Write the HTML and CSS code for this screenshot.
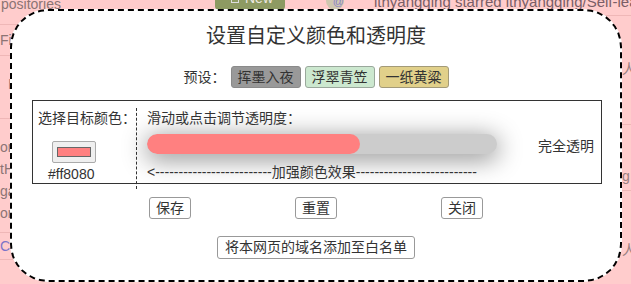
FILE: index.html
```html
<!DOCTYPE html>
<html lang="zh-CN">
<head>
<meta charset="utf-8">
<title>设置自定义颜色和透明度</title>
<link rel="stylesheet" href="styles.css">
</head>
<body>
<div class="page">
  <div class="col-left">
    <div class="lrow lrow-1"><span class="repos">positories</span></div>
    <div class="lrow lrow-2">Find a repository…</div>
    <div class="lrow lrow-3">I</div>
    <div class="lrow lrow-4">
      <div class="li">or</div>
      <div class="li">tH</div>
      <div class="li">ga</div>
      <div class="li">or</div>
    </div>
    <div class="lrow lrow-5 link">Create</div>
  </div>
  <div class="col-mid">
    <span class="new-btn"><span class="new-icon"></span>New</span>
    <span class="avatar">@</span>
  </div>
  <div class="col-right">
    <div class="rrow rrow-1"><span class="feed">ithyangqing starred ithyangqing/Self-learning</span></div>
    <div class="rrow rrow-2"><span class="edge">人</span></div>
    <div class="rrow rrow-3"><span class="edge">g</span></div>
    <div class="rrow rrow-4"><span class="edge">人</span></div>
  </div>
</div>

<div class="dialog">
  <h1 class="dlg-title">设置自定义颜色和透明度</h1>
  <div class="presets">
    <span class="presets-label">预设：</span>
    <button class="btn preset preset-ink">挥墨入夜</button>
    <button class="btn preset preset-jade">浮翠青笠</button>
    <button class="btn preset preset-millet">一纸黄粱</button>
  </div>
  <div class="settings">
    <div class="color-cell">
      <div class="cell-label">选择目标颜色：</div>
      <div class="swatch-btn"><span class="swatch"></span></div>
      <div class="hex">#ff8080</div>
    </div>
    <div class="alpha-cell">
      <div class="cell-label">滑动或点击调节透明度：</div>
      <div class="track"><div class="fill" style="width:213px"></div></div>
      <div class="hint">&lt;-------------------------加强颜色效果--------------------------</div>
    </div>
    <div class="clear-cell">完全透明</div>
  </div>
  <div class="actions">
    <div class="act"><button class="btn">保存</button></div>
    <div class="act"><button class="btn">重置</button></div>
    <div class="act"><button class="btn">关闭</button></div>
  </div>
  <div class="whitelist"><button class="btn btn-wide">将本网页的域名添加至白名单</button></div>
</div>
</body>
</html>
```

FILE: styles.css
```css
* { box-sizing: border-box; }

body {
  margin: 0;
  width: 631px;
  height: 284px;
  overflow: hidden;
  position: relative;
  background: #ffcccc;
  font-family: "Liberation Sans", "Noto Sans CJK SC", sans-serif;
  font-size: 14px;
  color: #333;
}

/* ---------- background page (tinted) ---------- */
.page {
  display: flex;
  height: 284px;
  color: #8c7474;
  font-size: 14px;
  white-space: nowrap;
}
.col-left { width: 200px; overflow: hidden; }
.lrow { border-bottom: 1px solid #efb7b7; }
.lrow-1 { height: 30px; }
.repos { display: block; margin-top: -5px; line-height: 18px; padding-left: 1px; }
.lrow-2 { height: 31px; line-height: 30px; padding-left: 0; }
.lrow-3 { height: 63px; line-height: 20px; padding: 18px 0 0 8px; }
.lrow-4 { height: 114px; padding-top: 17px; }
.li { line-height: 22px; }
.lrow-5 { height: 27px; line-height: 26px; }
.link { color: #7c74c8; }

.col-mid { width: 170px; display: flex; align-items: flex-start; }
.new-btn {
  margin: -14px 0 0 15px;
  width: 70px;
  height: 24px;
  background: #8d9a62;
  border-radius: 4px;
  color: #eee8e0;
  display: flex;
  align-items: center;
  padding: 0 0 0 16px;
  gap: 6px;
  line-height: 14px;
}
.new-icon { width: 8px; height: 10px; border: 1px solid #ddd; }
.avatar {
  margin: -8px 0 0 41px;
  width: 18px;
  height: 18px;
  border-radius: 50%;
  background: #cfc7b0;
  color: #8a80c8;
  font-size: 11px;
  line-height: 18px;
  text-align: right;
}

.col-right { flex: 1; overflow: hidden; }
.rrow { border-bottom: 1px solid #efb7b7; padding-left: 252px; }
.rrow-1 { height: 24px; padding-left: 4px; }
.feed { display: block; margin-top: -8px; line-height: 20px; font-size: 15px; color: #7a5e66; }
.rrow-2 { height: 109px; padding-top: 43px; line-height: 20px; }
.rrow-3 { height: 66px; padding-top: 41px; line-height: 20px; }
.rrow-4 { height: 86px; padding-top: 49px; line-height: 20px; border-bottom: none; }
.edge { color: #9a8080; }

/* ---------- dialog overlay ---------- */
.dialog {
  position: absolute;
  left: 10px;
  top: 9px;
  width: 612px;
  height: 273px;
  background: #fff;
  border: 2px dashed #000;
  border-radius: 38px;
  padding-top: 12px;
}

.dlg-title {
  margin: 0;
  font-size: 20px;
  font-weight: normal;
  line-height: 26px;
  text-align: center;
  color: #333;
}

.btn {
  font: inherit;
  font-size: 14px;
  line-height: 18px;
  color: #333;
  background: #fff;
  border: 1px solid #999;
  border-radius: 3px;
  padding: 1px 6px;
  margin: 0;
}

.presets {
  margin-top: 17px;
  display: flex;
  justify-content: center;
  align-items: center;
  gap: 4px;
  height: 22px;
}
.presets-label { width: 43px; line-height: 20px; }
.preset-ink { background: #999; border-color: #8a8a8a; }
.preset-jade { background: #cce8cf; border-color: #9aa89c; }
.preset-millet { background: #e1d08a; border-color: #a39a78; }

.settings {
  margin: 12px 0 0 20px;
  width: 570px;
  height: 84px;
  border: 1px solid #333;
  display: flex;
  align-items: stretch;
}

.cell-label { line-height: 20px; }

.color-cell {
  width: 103px;
  flex: none;
  padding: 7px 0 0 5px;
  display: flex;
  flex-direction: column;
  align-items: flex-start;
}
.swatch-btn {
  margin: 13px 0 0 14px;
  width: 44px;
  height: 22px;
  background: #efefef;
  border: 1px solid #aaa;
  border-radius: 2px;
  padding: 5px 4px;
}
.swatch {
  display: block;
  width: 100%;
  height: 100%;
  background: #ff8080;
  border: 1px solid #666;
}
.hex { margin: 3px 0 0 10px; line-height: 16px; }

.alpha-cell {
  width: 361px;
  flex: none;
  margin: 7px 0 -6px 0;
  border-left: 1px dashed #333;
  padding-left: 10px;
}
.track {
  margin-top: 6px;
  width: 350px;
  height: 20px;
  border-radius: 10px;
  background: #ccc;
  box-shadow: 0 4px 24px 2px rgba(0, 0, 0, 0.42);
  overflow: hidden;
}
.fill {
  height: 100%;
  background: #ff8080;
  border-radius: 10px;
}
.hint {
  margin-top: 10px;
  line-height: 16px;
  white-space: nowrap;
}

.clear-cell {
  flex: 1;
  margin-top: 35px;
  line-height: 20px;
  text-align: right;
  padding-right: 7px;
  align-self: flex-start;
}

.actions {
  margin-top: 13px;
  display: grid;
  grid-template-columns: repeat(3, 146px);
  justify-content: center;
  height: 22px;
}
.act { display: flex; justify-content: center; }

.whitelist {
  margin-top: 17px;
  display: flex;
  justify-content: center;
}
.btn-wide { line-height: 19px; padding: 1px 7px; }
```
